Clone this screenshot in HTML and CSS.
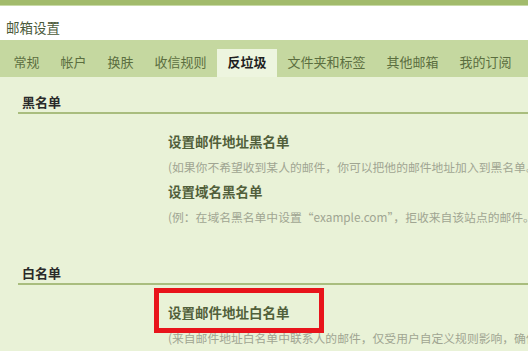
FILE: index.html
```html
<!DOCTYPE html>
<html lang="zh-CN">
<head>
    <meta charset="UTF-8">
    <meta name="viewport" content="width=device-width, initial-scale=1.0">
    <title>邮箱设置</title>
    <link rel="stylesheet" href="styles.css">
</head>
<body>
    <div class="top-strip"></div>
    <div class="page-title">邮箱设置</div>

    <div class="tabs">
        <div class="tab">常规</div>
        <div class="tab">帐户</div>
        <div class="tab">换肤</div>
        <div class="tab">收信规则</div>
        <div class="tab active">反垃圾</div>
        <div class="tab">文件夹和标签</div>
        <div class="tab">其他邮箱</div>
        <div class="tab">我的订阅</div>
    </div>

    <div class="content">
        <section class="block">
            <h2 class="block-title">黑名单</h2>
            <div class="block-body">
                <div class="item">
                    <span class="item-title">设置邮件地址黑名单</span>
                    <p class="item-desc">(如果你不希望收到某人的邮件，你可以把他的邮件地址加入到黑名单。)</p>
                </div>
                <div class="item">
                    <span class="item-title">设置域名黑名单</span>
                    <p class="item-desc">(例：在域名黑名单中设置“example.com”，拒收来自该站点的邮件。)</p>
                </div>
            </div>
        </section>

        <section class="block">
            <h2 class="block-title">白名单</h2>
            <div class="block-body">
                <div class="item">
                    <span class="item-title highlight">设置邮件地址白名单</span>
                    <p class="item-desc">(来自邮件地址白名单中联系人的邮件，仅受用户自定义规则影响，确保不被误判。)</p>
                </div>
                <div class="item">
                    <span class="item-title">设置域名白名单</span>
                </div>
            </div>
        </section>
    </div>
</body>
</html>
```

FILE: styles.css
```css
body {
    margin: 0;
    width: 528px;
    height: 351px;
    overflow: hidden;
    font-family: "Noto Sans CJK SC", "Liberation Sans", sans-serif;
    background-color: #e9f2d7;
}

.top-strip {
    height: 5px;
    background-color: #a2bb6c;
    border-bottom: 1px solid #c9daa8;
}

.page-title {
    height: 34px;
    line-height: 42px;
    padding-left: 6px;
    background-color: #ffffff;
    font-size: 13.5px;
    color: #4b5a3a;
}

/* tab bar */
.tabs {
    display: flex;
    align-items: flex-end;
    height: 37px;
    padding-left: 3px;
    background-color: #c5d8a0;
}

.tab {
    height: 28px;
    line-height: 26px;
    padding: 0 10.5px;
    font-size: 13px;
    color: #5b6e3f;
    white-space: nowrap;
}

.tab.active {
    background-color: #edf5df;
    color: #1e1e1e;
    font-weight: bold;
}

/* content */
.content {
    padding: 15px 0 0 18px;
}

.block + .block {
    margin-top: 35px;
}

.block-title {
    margin: 0;
    padding-left: 4px;
    height: 20px;
    line-height: 20px;
    font-size: 13px;
    font-weight: bold;
    color: #2a2a2a;
    border-bottom: 2px solid #a9bd7e;
}

.block-body {
    padding: 14px 0 0 150px;
}

.item-title {
    display: inline-block;
    line-height: 22px;
    margin-bottom: 4px;
    font-size: 13.5px;
    font-weight: bold;
    color: #515f3a;
    white-space: nowrap;
}

.item-desc {
    margin: 0;
    line-height: 22px;
    font-size: 11.8px;
    color: #a0a592;
    white-space: nowrap;
}

/* red annotation box */
.highlight {
    position: relative;
}

.highlight::after {
    content: "";
    position: absolute;
    top: -13px;
    bottom: -10px;
    left: -14px;
    right: -34px;
    border: 5px solid #e8141b;
}
```
